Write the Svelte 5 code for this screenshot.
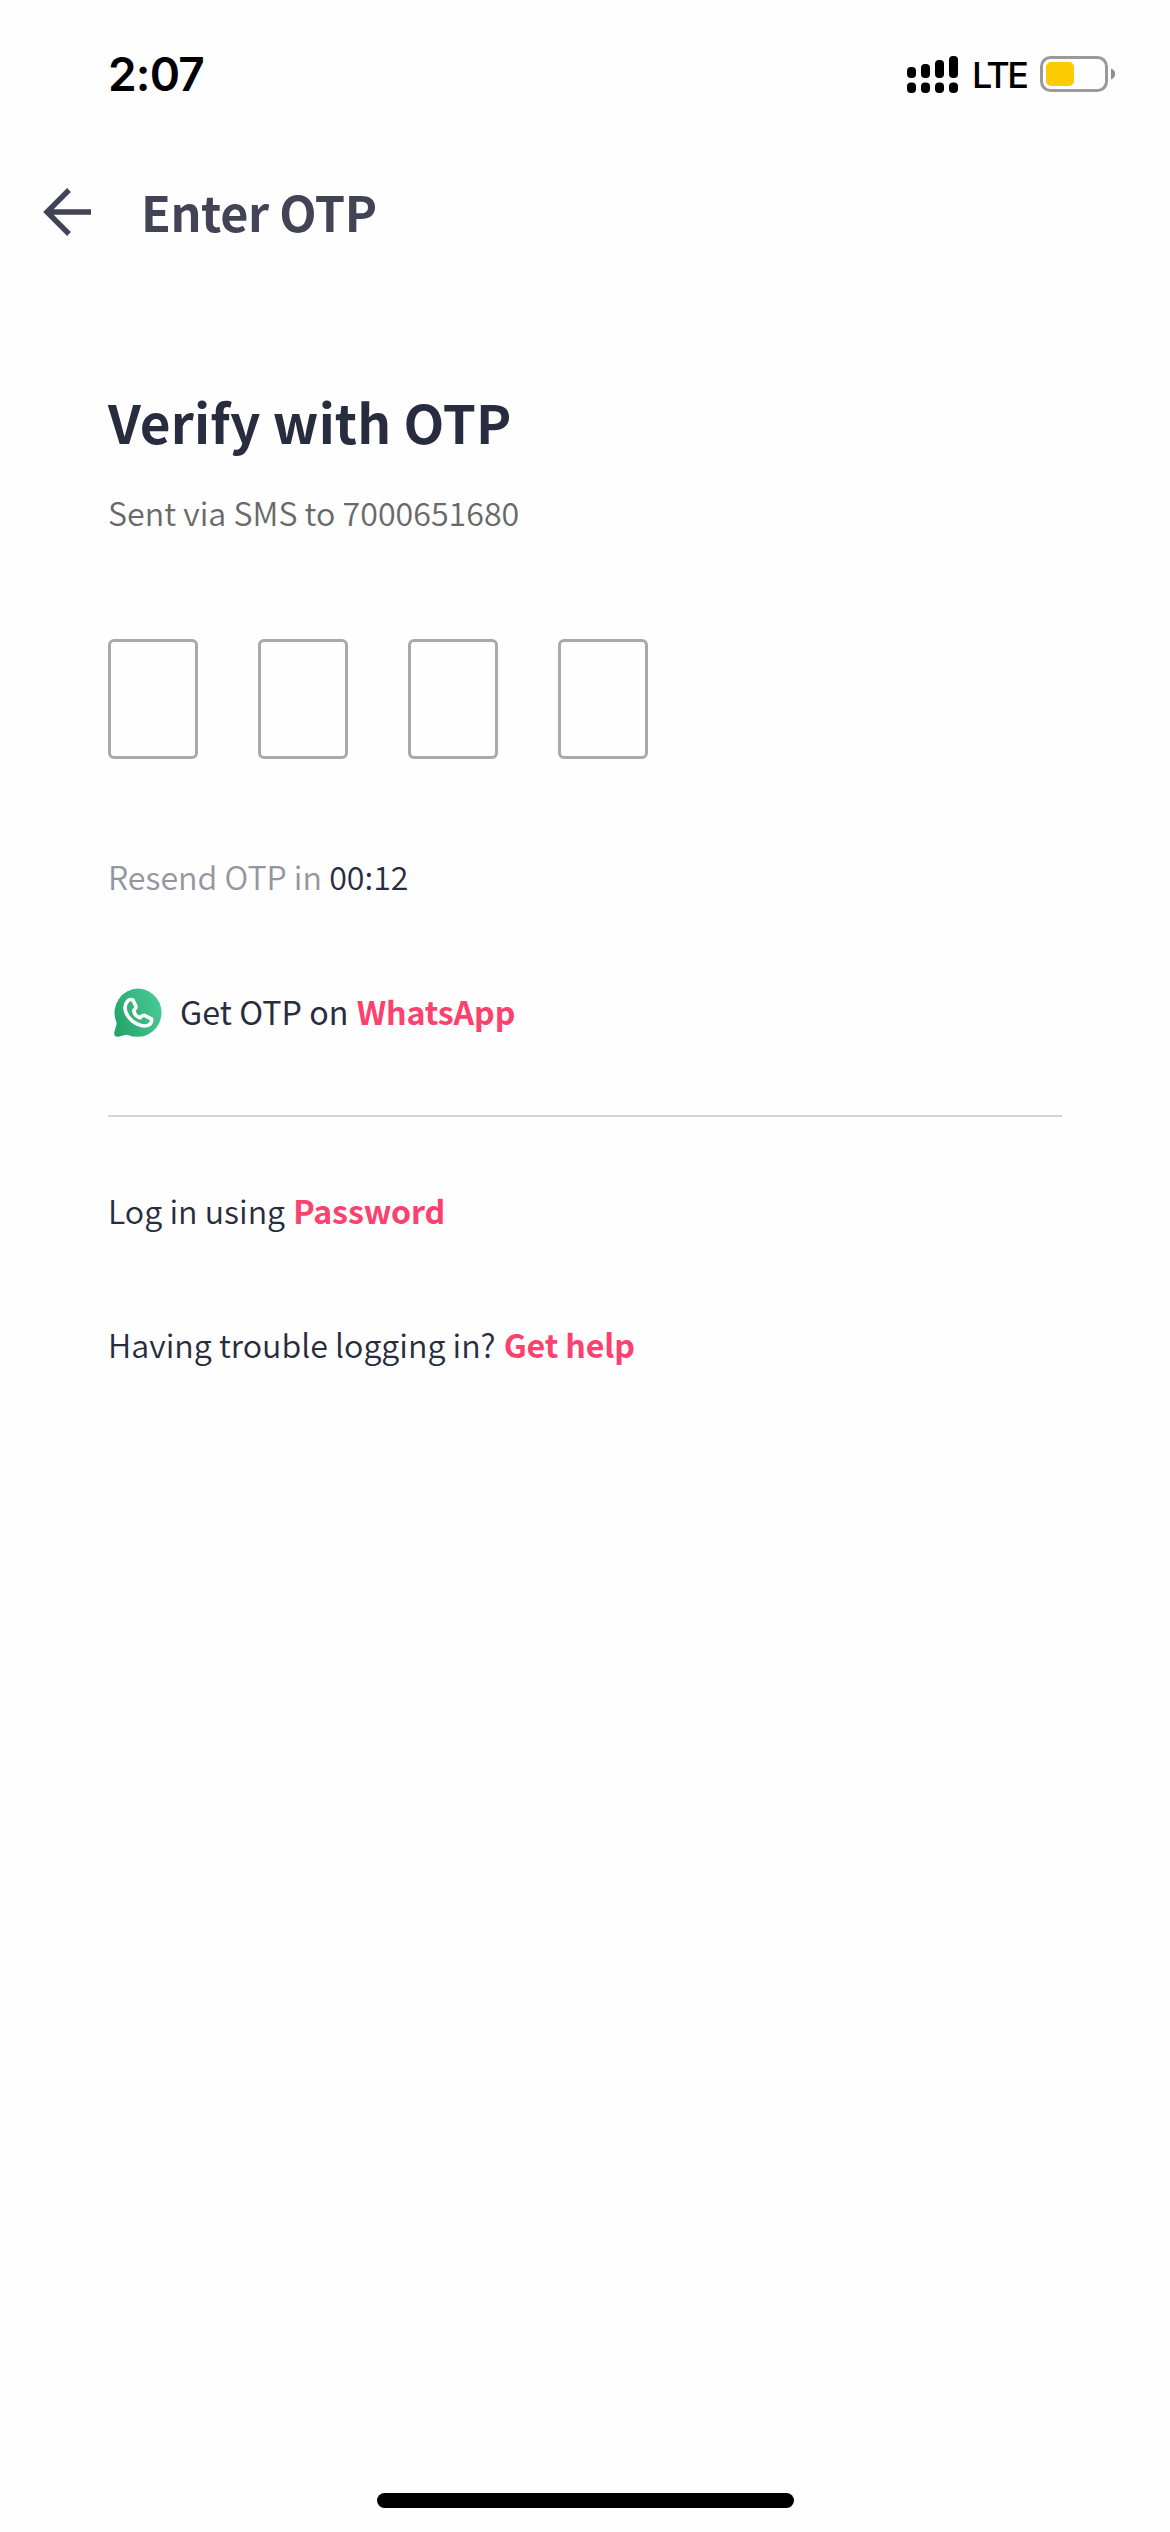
<script>
  const signal = [11, 14, 18, 22];
  const digits = [0, 1, 2, 3];
</script>

<div class="screen">
  <header class="status">
    <span class="time">2:07</span>
    <div class="indicators">
      <svg class="signal" width="51" height="38" viewBox="0 0 51 38">
        {#each signal as h, i}
          <rect x={i * 14} y={23 - h} width="9" height={h} rx="4" />
          <rect x={i * 14} y="27.5" width="9" height="10.5" rx="4" />
        {/each}
      </svg>
      <span class="network">LTE</span>
      <svg class="battery" width="76" height="36" viewBox="0 0 76 36">
        <rect x="1.5" y="1.5" width="65" height="33" rx="9" fill="none" stroke="#9a9a9e" stroke-width="3" />
        <rect x="6" y="6" width="28" height="24" rx="5" fill="#fdcb02" />
        <path d="M71 12.5C76.500 14.500 76.500 21.500 71 23.500Z" fill="#8e8e92" />
      </svg>
    </div>
  </header>

  <nav class="bar">
    <svg width="48" height="48" viewBox="0 0 48 48" fill="none" stroke="#424354" stroke-width="5.400">
      <path d="M48 24H4M26 2L4 24L26 46" />
    </svg>
    <span class="heading">Enter OTP</span>
  </nav>

  <main>
    <h1>Verify with OTP</h1>
    <p class="line sent">Sent via SMS to 7000651680</p>

    <div class="boxes">
      {#each digits as d (d)}
        <span class="box"></span>
      {/each}
    </div>

    <p class="line resend">Resend OTP in <span class="timer">00:12</span></p>

    <div class="whatsapp">
      <svg width="50" height="50" viewBox="0 0 50 50">
        <defs>
          <linearGradient id="wa" x1="0" y1="0.700" x2="1" y2="0.300">
            <stop offset="0" stop-color="#25a468" />
            <stop offset="1" stop-color="#49cb96" />
          </linearGradient>
        </defs>
        <path fill="url(#wa)" d="M25.500 .5A24.200 24.200 0 1 1 15 47Q13 46.200 11 47.200L5 48.800Q.8 49 1.200 44.500L3.500 36.500Q4 35 3 33A24.200 24.200 0 0 1 25.500 .5Z" />
        <path fill="none" stroke="#fff" stroke-width="3.600" stroke-linejoin="round" d="M14.500 13.200Q17.500 10.500 20 12L23 18.500Q23.200 20.500 20.800 22.500Q21.500 28 27 29.800Q29.500 27 31.500 27.300L38.500 30.800Q39.300 34.500 36.200 36.800Q31.500 39.500 24.500 36.200Q16.500 32.500 13 24.500Q10.500 17.500 14.500 13.200Z" />
      </svg>
      <p class="line get">Get OTP on <b>WhatsApp</b></p>
    </div>

    <div class="divider"></div>

    <p class="line login">Log in using <b>Password</b></p>
    <p class="line help">Having trouble logging in? <b>Get help</b></p>
  </main>

  <div class="home"></div>
</div>

<style>
  :global(body) {
    margin: 0;
    background: #fefefe;
  }
  .screen {
    box-sizing: border-box;
    width: 1170px;
    height: 2532px;
    display: flex;
    flex-direction: column;
    background: #fefefe;
    color: #282c3f;
    font-family: "Noto Sans CJK JP", "Noto Sans CJK SC", sans-serif;
    padding-bottom: 24px;
  }
  svg {
    display: block;
    flex: none;
  }
  .status {
    box-sizing: border-box;
    height: 150px;
    padding: 44px 54px 0 108px;
    display: flex;
    justify-content: space-between;
    align-items: flex-start;
    color: #000;
    font-family: Inter, sans-serif;
  }
  .time {
    font-size: 46px;
    font-weight: 600;
    line-height: 60px;
    letter-spacing: -0.8px;
  }
  .indicators {
    display: flex;
    align-items: center;
    height: 60px;
  }
  .network {
    font-size: 36px;
    font-weight: 500;
    line-height: 60px;
    width: 82px;
    box-sizing: border-box;
    padding: 2px 0 0 14px;
    letter-spacing: -2.6px;
  }
  .bar {
    display: flex;
    align-items: center;
    gap: 50px;
    height: 124px;
    padding-left: 43px;
  }
  .heading {
    font-size: 48.5px;
    font-weight: 700;
    line-height: 72px;
    margin-top: -2px;
    color: #424354;
    letter-spacing: -0.4px;
  }
  main {
    flex: 1;
    padding: 109px 108px 0;
  }
  h1 {
    margin: 0;
    font-size: 53px;
    font-weight: 700;
    line-height: 76px;
    letter-spacing: 0.12px;
    white-space: nowrap;
  }
  .line {
    margin: 0;
    font-size: 32.2px;
    font-weight: 350;
    line-height: 48px;
    white-space: nowrap;
  }
  b {
    margin-left: 1px;
    font-weight: 700;
    letter-spacing: -0.15px;
    color: #fb416d;
  }
  .sent {
    margin-top: 29px;
    color: #696969;
  }
  .boxes {
    display: flex;
    gap: 60px;
    margin: 103px 0 93px;
  }
  .box {
    box-sizing: border-box;
    width: 90px;
    height: 120px;
    border: 3px solid #a9a9ac;
    border-radius: 6px;
  }
  .resend {
    color: #94969f;
  }
  .timer {
    color: #282c3f;
  }
  .whatsapp {
    display: flex;
    align-items: center;
    gap: 17px;
    margin-top: 87px;
    padding-left: 5px;
  }
  .get {
    margin-bottom: 4px;
    font-weight: 400;
    letter-spacing: 0.05px;
  }
  .divider {
    height: 2px;
    margin: 76px 0 69px;
    background: #d4d5d9;
  }
  .help {
    margin-top: 86px;
  }
  .home {
    width: 417px;
    height: 15px;
    margin: 0 auto;
    border-radius: 8px;
    background: #000;
  }
</style>
